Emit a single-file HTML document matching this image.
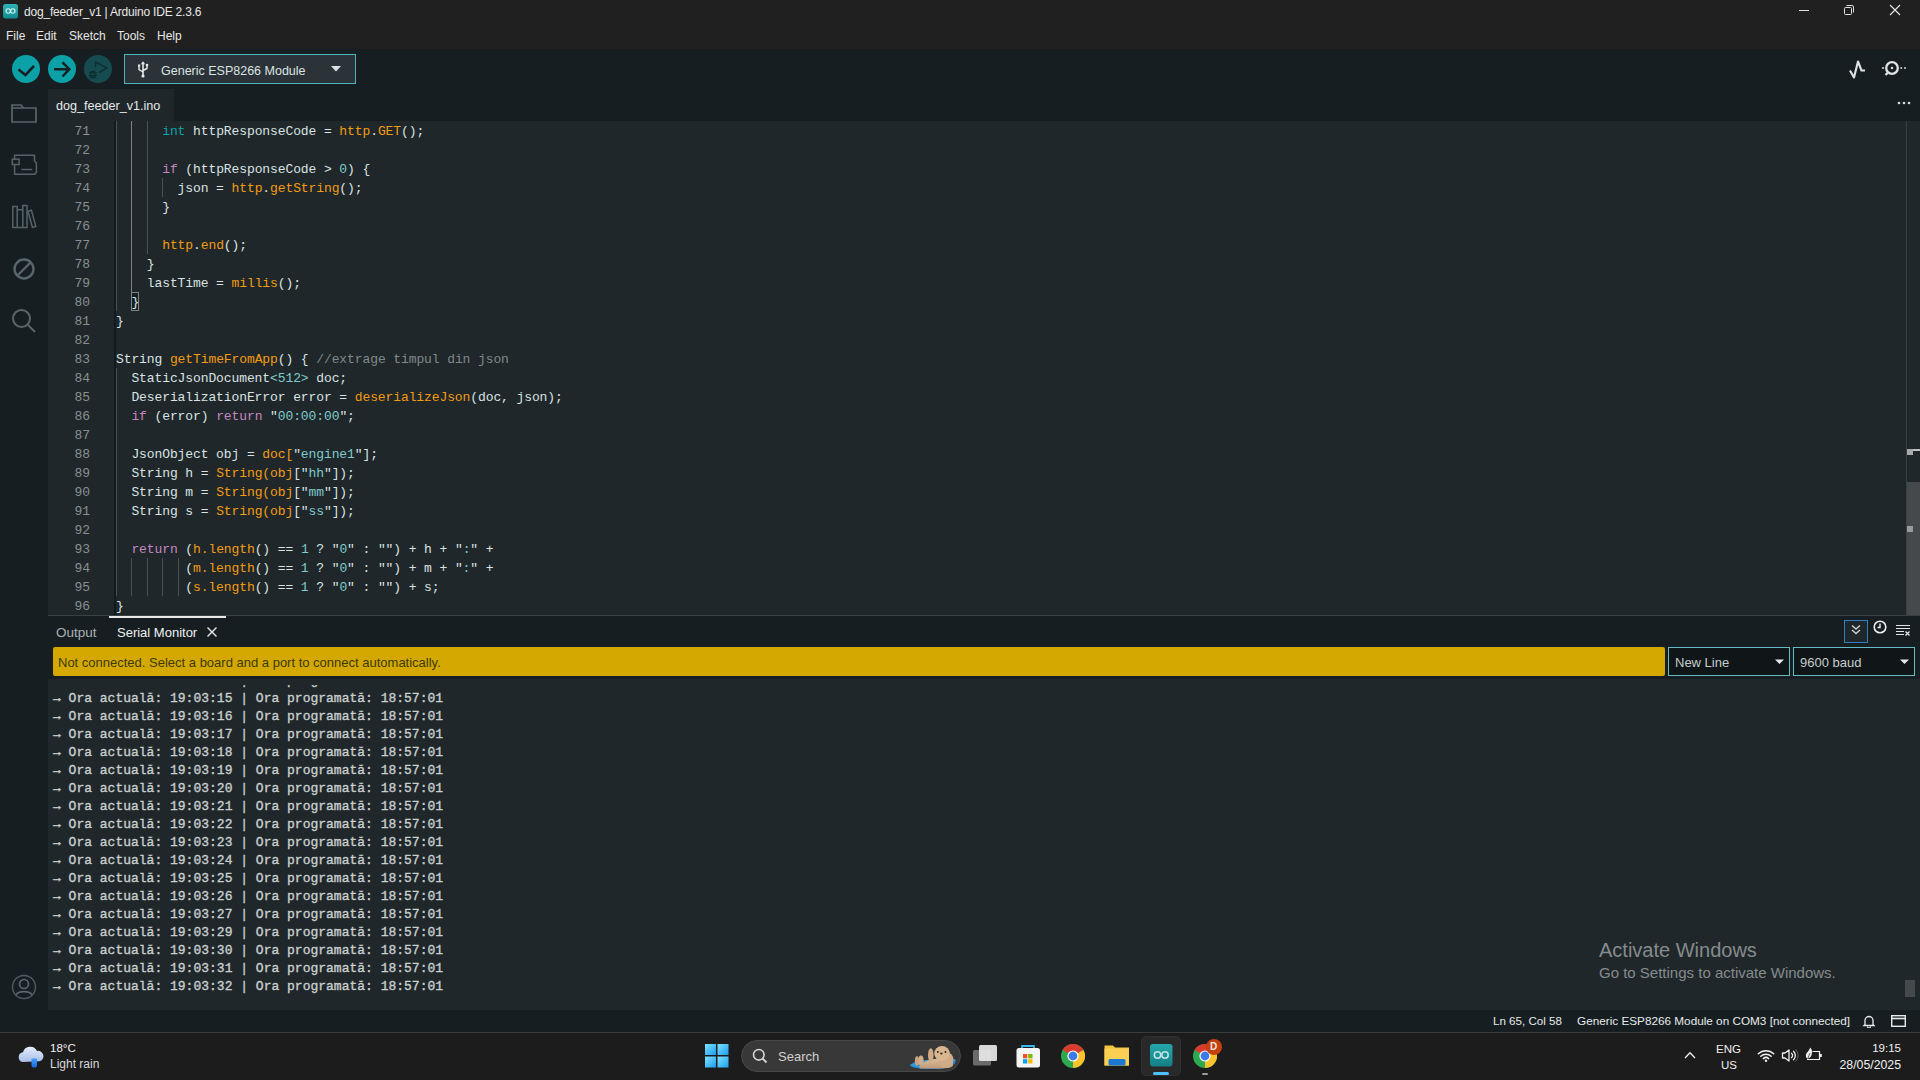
<!DOCTYPE html>
<html><head><meta charset="utf-8">
<style>
*{margin:0;padding:0;box-sizing:border-box}
html,body{width:1920px;height:1080px;overflow:hidden;background:#1f272a;font-family:"Liberation Sans",sans-serif;color:#dadada}
.a{position:absolute}
#title{left:0;top:0;width:1920px;height:49px;background:#202020}
#tb{left:0;top:49px;width:1920px;height:40px;background:#171e21}
#side{left:0;top:89px;width:48px;height:921px;background:#171e21}
#tabrow{left:48px;top:89px;width:1872px;height:32px;background:#171e21}
#editor{left:48px;top:121px;width:1872px;height:494px;background:#1f272a;overflow:hidden}
#panelhdr{left:48px;top:615px;width:1872px;height:64px;background:#171e21}
#serial{left:48px;top:679px;width:1872px;height:331px;background:#1f272a;overflow:hidden}
#status{left:0;top:1010px;width:1920px;height:22px;background:#171e21}
#taskbar{left:0;top:1032px;width:1920px;height:48px;background:#1c1c1c;box-shadow:inset 0 1px 0 #3a3a3a}
.t{position:absolute;white-space:pre;line-height:1}
.code{position:absolute;font-family:"Liberation Mono",monospace;font-size:13px;white-space:pre;letter-spacing:-0.1px;color:#dae3e3;line-height:19px}
.ln{position:absolute;font-family:"Liberation Mono",monospace;font-size:13px;white-space:pre;letter-spacing:-0.1px;color:#8a8f91;line-height:19px;text-align:right;width:42px;left:0}
.k{color:#0ca1a6}.p{color:#c586c0}.f{color:#f39c12}.s{color:#7fcbcd}.c{color:#7f8a8c}
.ser{position:absolute;left:5px;font-family:"Liberation Mono",monospace;font-weight:normal;-webkit-text-stroke:0.35px #c9cece;font-size:13px;white-space:pre;color:#c9cece;line-height:18px}
</style></head><body>
<div class="a" id="title">
  <svg class="a" style="left:3px;top:4px" width="15" height="15" viewBox="0 0 15 15"><defs><linearGradient id="ag" x1="0" y1="0" x2="0" y2="1"><stop offset="0" stop-color="#2bb3b7"/><stop offset="1" stop-color="#128a8f"/></linearGradient></defs><rect x="0" y="0" width="15" height="14.5" rx="2.5" fill="url(#ag)"/><circle cx="5.2" cy="7" r="2.2" fill="none" stroke="#d8f2f2" stroke-width="1.1"/><circle cx="9.8" cy="7" r="2.2" fill="none" stroke="#d8f2f2" stroke-width="1.1"/></svg>
  <div class="t" style="left:24px;top:6px;font-size:12px;letter-spacing:-0.2px;color:#e8e8e8">dog_feeder_v1 | Arduino IDE 2.3.6</div>
  <div class="t" style="left:6px;top:30px;font-size:12px;color:#e6e6e6">File</div>
  <div class="t" style="left:36px;top:30px;font-size:12px;color:#e6e6e6">Edit</div>
  <div class="t" style="left:69px;top:30px;font-size:12px;color:#e6e6e6">Sketch</div>
  <div class="t" style="left:117px;top:30px;font-size:12px;color:#e6e6e6">Tools</div>
  <div class="t" style="left:157px;top:30px;font-size:12px;color:#e6e6e6">Help</div>
  <!-- window controls -->
  <div class="a" style="left:1799px;top:10px;width:10px;height:1px;background:#e0e0e0"></div>
  <svg class="a" style="left:1843px;top:4px" width="12" height="12" viewBox="0 0 12 12"><rect x="1.5" y="3.5" width="7" height="7" rx="1" fill="none" stroke="#e0e0e0" stroke-width="1"/><path d="M3.5 1.5 H9 a1.5 1.5 0 0 1 1.5 1.5 V8.5" fill="none" stroke="#e0e0e0" stroke-width="1"/></svg>
  <svg class="a" style="left:1889px;top:4px" width="12" height="12" viewBox="0 0 12 12"><path d="M1 1 L11 11 M11 1 L1 11" stroke="#e8e8e8" stroke-width="1.1"/></svg>
</div>
<div class="a" id="tb">
  <div class="a" style="left:12px;top:6px;width:28px;height:28px;border-radius:50%;background:#0ca1a6"></div>
  <svg class="a" style="left:12px;top:6px" width="28" height="28" viewBox="0 0 28 28"><path d="M6.5 14.5 L13.5 20 L22 10.8" fill="none" stroke="#172024" stroke-width="2.6"/></svg>
  <div class="a" style="left:48px;top:6px;width:28px;height:28px;border-radius:50%;background:#0ca1a6"></div>
  <svg class="a" style="left:48px;top:6px" width="28" height="28" viewBox="0 0 28 28"><path d="M6 14.2 H21 M14.5 7.3 L21.3 14.2 L14.5 21.5" fill="none" stroke="#172024" stroke-width="2.5"/></svg>
  <div class="a" style="left:84px;top:6px;width:28px;height:28px;border-radius:50%;background:#164b50"></div>
  <svg class="a" style="left:84px;top:6px" width="28" height="28" viewBox="0 0 28 28"><path d="M11.5 12 V7 L23 13 L15 17.5" fill="none" stroke="#0d3033" stroke-width="1.6" stroke-linejoin="round"/><ellipse cx="9" cy="19.5" rx="2.6" ry="3.2" fill="none" stroke="#0d3033" stroke-width="1.4"/><path d="M5 17.5 H13 M5 20.5 H13 M5.5 23 L7 22 M12.5 23 L11 22 M9 16 V23" stroke="#0d3033" stroke-width="1"/></svg>
  <div class="a" style="left:124px;top:5px;width:232px;height:30px;border:1px solid #4db6bb;background:#2c3338"></div>
  <svg class="a" style="left:136px;top:12px" width="14" height="17" viewBox="0 0 14 17"><path d="M7 3 V14.5" stroke="#e6eaea" stroke-width="1.6"/><path d="M4.8 3.2 L7 0.3 L9.2 3.2 Z" fill="#e6eaea"/><path d="M3 5 V8.5 L7 11" fill="none" stroke="#e6eaea" stroke-width="1.4"/><path d="M11 4.5 V7.5 L7 9.5" fill="none" stroke="#e6eaea" stroke-width="1.4"/><rect x="2" y="3.5" width="2.2" height="2.2" fill="#e6eaea"/><circle cx="11" cy="4" r="1.3" fill="#e6eaea"/><circle cx="7" cy="15" r="1.6" fill="#e6eaea"/></svg>
  <div class="t" style="left:161px;top:16px;font-size:12.5px;color:#dae3e3">Generic ESP8266 Module</div>
  <svg class="a" style="left:331px;top:17px" width="10" height="6" viewBox="0 0 10 6"><path d="M0 0 H10 L5 5.5 Z" fill="#dae3e3"/></svg>
  <!-- right icons -->
  <svg class="a" style="left:1848px;top:9px" width="20" height="22" viewBox="0 0 20 22"><path d="M2 12.5 L6 19.5 L10 3.5 L13.5 12.5 H17" fill="none" stroke="#dfe5e5" stroke-width="2.1" stroke-linejoin="round"/></svg>
  <svg class="a" style="left:1880px;top:9px" width="28" height="24" viewBox="0 0 28 24"><circle cx="12" cy="10" r="5.8" fill="none" stroke="#dfe5e5" stroke-width="2.3"/><circle cx="12" cy="10" r="1.2" fill="#dfe5e5"/><path d="M8 14.5 L5.5 17" stroke="#dfe5e5" stroke-width="2.3"/><circle cx="3" cy="10" r="1" fill="#dfe5e5"/><circle cx="21.2" cy="10" r="0.9" fill="#dfe5e5"/><circle cx="25" cy="10" r="0.9" fill="#dfe5e5"/></svg>
</div>
<div class="a" id="side">
  <svg class="a" style="left:11px;top:13px" width="26" height="22" viewBox="0 0 26 22"><path d="M1 3 H10 L12.5 6 H25 V20 H1 Z M1 6 H12.5" fill="none" stroke="#58656b" stroke-width="1.7"/></svg>
  <svg class="a" style="left:11px;top:63px" width="28" height="26" viewBox="0 0 28 26"><path d="M3.6 3.2 H23.5 V9 L25.4 11 V20.5 L23.8 22.2 H3.6 Z" fill="none" stroke="#56636a" stroke-width="1.5"/><rect x="1.3" y="7.2" width="6.8" height="5.3" fill="#171e21" stroke="#56636a" stroke-width="1.5"/><path d="M10.5 17.5 H21.2" stroke="#56636a" stroke-width="1.4"/></svg>
  <svg class="a" style="left:11px;top:115px" width="28" height="26" viewBox="0 0 28 26"><path d="M1.8 2.5 H6.2 V23.5 H1.8 Z M6.2 5.8 H11.8 V23.5 H6.2 M11.8 1.5 H16 V23.5 H11.8 Z" fill="none" stroke="#56636a" stroke-width="1.5"/><path d="M17 7.3 L20.4 6.3 L24.8 22.4 L21.4 23.4 Z" fill="none" stroke="#56636a" stroke-width="1.5"/></svg>
  <svg class="a" style="left:12px;top:168px" width="24" height="24" viewBox="0 0 24 24"><circle cx="12" cy="12" r="9.5" fill="none" stroke="#58656b" stroke-width="2.4"/><path d="M5.5 18.5 L18.5 5.5" stroke="#58656b" stroke-width="2.4"/></svg>
  <svg class="a" style="left:10px;top:218px" width="28" height="28" viewBox="0 0 28 28"><circle cx="11.5" cy="11.5" r="8.5" fill="none" stroke="#58656b" stroke-width="2"/><path d="M18 18 L25 25" stroke="#58656b" stroke-width="2"/></svg>
  <svg class="a" style="left:11px;top:885px" width="26" height="26" viewBox="0 0 26 26"><circle cx="13" cy="13" r="11.5" fill="none" stroke="#4f5b61" stroke-width="1.4"/><circle cx="13" cy="10" r="4.5" fill="none" stroke="#58656b" stroke-width="1.7"/><path d="M5 21 C7 16.5 19 16.5 21 21" fill="none" stroke="#58656b" stroke-width="1.7"/></svg>
</div>
<div class="a" id="tabrow">
  <div class="a" style="left:0;top:0;width:126px;height:32px;background:#1f272a"></div>
  <div class="t" style="left:8px;top:11px;font-size:12.6px;color:#e6eaea">dog_feeder_v1.ino</div>
  <svg class="a" style="left:1849px;top:12px" width="14" height="4" viewBox="0 0 14 4"><circle cx="2" cy="2" r="1.3" fill="#d0dde0"/><circle cx="7" cy="2" r="1.3" fill="#d0dde0"/><circle cx="12" cy="2" r="1.3" fill="#d0dde0"/></svg>
</div>
<div class="a" id="editor">
<div class="a" style="left:66px;top:0px;width:2px;height:494px;background:#131a1c"></div>
<div class="a" style="left:68px;top:0px;width:1px;height:190px;background:#4a5154"></div>
<div class="a" style="left:83px;top:0px;width:1px;height:171px;background:#7d8385"></div>
<div class="a" style="left:99px;top:0px;width:1px;height:133px;background:#4a5154"></div>
<div class="a" style="left:114px;top:57px;width:1px;height:19px;background:#4a5154"></div>
<div class="a" style="left:68px;top:247px;width:1px;height:228px;background:#4a5154"></div>
<div class="a" style="left:83px;top:437px;width:1px;height:38px;background:#4a5154"></div>
<div class="a" style="left:99px;top:437px;width:1px;height:38px;background:#4a5154"></div>
<div class="a" style="left:114px;top:437px;width:1px;height:38px;background:#4a5154"></div>
<div class="a" style="left:130px;top:437px;width:1px;height:38px;background:#4a5154"></div>
<div class="a" style="left:83px;top:171px;width:8px;height:19px;border:1px solid #7f8587;background:#142124"></div>
<div class="ln" style="top:1px">71</div>
<div class="code" style="left:68px;top:1px">      <span class="k">int</span> httpResponseCode = <span class="f">http</span>.<span class="f">GET</span>();</div>
<div class="ln" style="top:20px">72</div>
<div class="ln" style="top:39px">73</div>
<div class="code" style="left:68px;top:39px">      <span class="p">if</span> (httpResponseCode &gt; <span class="s">0</span>) {</div>
<div class="ln" style="top:58px">74</div>
<div class="code" style="left:68px;top:58px">        json = <span class="f">http</span>.<span class="f">getString</span>();</div>
<div class="ln" style="top:77px">75</div>
<div class="code" style="left:68px;top:77px">      }</div>
<div class="ln" style="top:96px">76</div>
<div class="ln" style="top:115px">77</div>
<div class="code" style="left:68px;top:115px">      <span class="f">http</span>.<span class="f">end</span>();</div>
<div class="ln" style="top:134px">78</div>
<div class="code" style="left:68px;top:134px">    }</div>
<div class="ln" style="top:153px">79</div>
<div class="code" style="left:68px;top:153px">    lastTime = <span class="f">millis</span>();</div>
<div class="ln" style="top:172px">80</div>
<div class="code" style="left:68px;top:172px">  }</div>
<div class="ln" style="top:191px">81</div>
<div class="code" style="left:68px;top:191px">}</div>
<div class="ln" style="top:210px">82</div>
<div class="ln" style="top:229px">83</div>
<div class="code" style="left:68px;top:229px">String <span class="f">getTimeFromApp</span>() { <span class="c">//extrage timpul din json</span></div>
<div class="ln" style="top:248px">84</div>
<div class="code" style="left:68px;top:248px">  StaticJsonDocument<span class="s">&lt;512&gt;</span> doc;</div>
<div class="ln" style="top:267px">85</div>
<div class="code" style="left:68px;top:267px">  DeserializationError error = <span class="f">deserializeJson</span>(doc, json);</div>
<div class="ln" style="top:286px">86</div>
<div class="code" style="left:68px;top:286px">  <span class="p">if</span> (error) <span class="p">return</span> &quot;<span class="s">00:00:00</span>&quot;;</div>
<div class="ln" style="top:305px">87</div>
<div class="ln" style="top:324px">88</div>
<div class="code" style="left:68px;top:324px">  JsonObject obj = <span class="f">doc[</span>&quot;<span class="s">engine1</span>&quot;];</div>
<div class="ln" style="top:343px">89</div>
<div class="code" style="left:68px;top:343px">  String h = <span class="f">String(obj</span>[&quot;<span class="s">hh</span>&quot;]);</div>
<div class="ln" style="top:362px">90</div>
<div class="code" style="left:68px;top:362px">  String m = <span class="f">String(obj</span>[&quot;<span class="s">mm</span>&quot;]);</div>
<div class="ln" style="top:381px">91</div>
<div class="code" style="left:68px;top:381px">  String s = <span class="f">String(obj</span>[&quot;<span class="s">ss</span>&quot;]);</div>
<div class="ln" style="top:400px">92</div>
<div class="ln" style="top:419px">93</div>
<div class="code" style="left:68px;top:419px">  <span class="p">return</span> (<span class="f">h.length</span>() == <span class="s">1</span> ? &quot;<span class="s">0</span>&quot; : &quot;&quot;) + h + &quot;<span class="s">:</span>&quot; +</div>
<div class="ln" style="top:438px">94</div>
<div class="code" style="left:68px;top:438px">         (<span class="f">m.length</span>() == <span class="s">1</span> ? &quot;<span class="s">0</span>&quot; : &quot;&quot;) + m + &quot;<span class="s">:</span>&quot; +</div>
<div class="ln" style="top:457px">95</div>
<div class="code" style="left:68px;top:457px">         (<span class="f">s.length</span>() == <span class="s">1</span> ? &quot;<span class="s">0</span>&quot; : &quot;&quot;) + s;</div>
<div class="ln" style="top:476px">96</div>
<div class="code" style="left:68px;top:476px">}</div>
<div class="a" style="left:1858px;top:0;width:1px;height:494px;background:#394043"></div>
<div class="a" style="left:1859px;top:361px;width:13px;height:133px;background:#45494c"></div>
<div class="a" style="left:1859px;top:328px;width:13px;height:2px;background:#c0c0c0"></div>
<div class="a" style="left:1859px;top:328px;width:6px;height:6px;background:#a8a8a8"></div>
<div class="a" style="left:1859px;top:405px;width:6px;height:6px;background:#9a9a9a"></div>
</div>
<div class="a" id="panelhdr">
<div class="a" style="left:0;top:0;width:1872px;height:1px;background:#3a4145"></div>
<div class="a" style="left:61px;top:1px;width:117px;height:2px;background:#e8e8e8"></div>
<div class="t" style="left:8px;top:11px;font-size:13.5px;color:#a9b1b3">Output</div>
<div class="t" style="left:69px;top:11px;font-size:13px;color:#eef2f2">Serial Monitor</div>
<svg class="a" style="left:159px;top:12px" width="10" height="10" viewBox="0 0 10 10"><path d="M0.5 0.5 L9.5 9.5 M9.5 0.5 L0.5 9.5" stroke="#e8ecec" stroke-width="1.4"/></svg>
<div class="a" style="left:5px;top:32px;width:1612px;height:29px;background:#d4a800;border-radius:2px"></div>
<div class="t" style="left:10px;top:41px;font-size:13px;color:#3d3a0a">Not connected. Select a board and a port to connect automatically.</div>
<div class="a" style="left:1796px;top:5px;width:24px;height:23px;border:1px solid #2f7fc1;background:#1f272a"></div>
<svg class="a" style="left:1802px;top:9px" width="12" height="12" viewBox="0 0 12 12"><path d="M2 1.5 L6 5 L10 1.5 M2 6 L6 9.5 L10 6" fill="none" stroke="#c8d0d2" stroke-width="1.5"/></svg>
<svg class="a" style="left:1825px;top:5px" width="14" height="14" viewBox="0 0 14 14"><circle cx="7" cy="7" r="5.8" fill="none" stroke="#eef2f2" stroke-width="1.6"/><path d="M7 3.5 V7.5 H4.5" fill="none" stroke="#eef2f2" stroke-width="1.4"/></svg>
<svg class="a" style="left:1847px;top:9px" width="16" height="13" viewBox="0 0 16 13"><path d="M1 1.5 H15 M1 4.5 H15 M1 7.5 H9 M1 10.5 H9" stroke="#dfe5e5" stroke-width="1"/><path d="M10.5 7.5 L14.5 11.5 M14.5 7.5 L10.5 11.5" stroke="#dfe5e5" stroke-width="1.3"/></svg>
<div class="a" style="left:1620px;top:32px;width:122px;height:29px;border:1px solid #62bcc1;background:#101618"></div>
<div class="t" style="left:1627px;top:41px;font-size:13px;color:#c5cccd">New Line</div>
<svg class="a" style="left:1727px;top:44px" width="9" height="6" viewBox="0 0 9 6"><path d="M0 0.5 H9 L4.5 5 Z" fill="#e6eaea"/></svg>
<div class="a" style="left:1745px;top:32px;width:122px;height:29px;border:1px solid #62bcc1;background:#101618"></div>
<div class="t" style="left:1752px;top:41px;font-size:13px;color:#c5cccd">9600 baud</div>
<svg class="a" style="left:1852px;top:44px" width="9" height="6" viewBox="0 0 9 6"><path d="M0 0.5 H9 L4.5 5 Z" fill="#e6eaea"/></svg>
</div>
<div class="a" id="serial"><div class="a" style="left:0;top:6px;width:1800px;height:325px;overflow:hidden">
<div class="ser" style="top:-13px">→ Ora actuală: 19:03:14 | Ora programată: 18:57:01</div>
<div class="ser" style="top:5px">→ Ora actuală: 19:03:15 | Ora programată: 18:57:01</div>
<div class="ser" style="top:23px">→ Ora actuală: 19:03:16 | Ora programată: 18:57:01</div>
<div class="ser" style="top:41px">→ Ora actuală: 19:03:17 | Ora programată: 18:57:01</div>
<div class="ser" style="top:59px">→ Ora actuală: 19:03:18 | Ora programată: 18:57:01</div>
<div class="ser" style="top:77px">→ Ora actuală: 19:03:19 | Ora programată: 18:57:01</div>
<div class="ser" style="top:95px">→ Ora actuală: 19:03:20 | Ora programată: 18:57:01</div>
<div class="ser" style="top:113px">→ Ora actuală: 19:03:21 | Ora programată: 18:57:01</div>
<div class="ser" style="top:131px">→ Ora actuală: 19:03:22 | Ora programată: 18:57:01</div>
<div class="ser" style="top:149px">→ Ora actuală: 19:03:23 | Ora programată: 18:57:01</div>
<div class="ser" style="top:167px">→ Ora actuală: 19:03:24 | Ora programată: 18:57:01</div>
<div class="ser" style="top:185px">→ Ora actuală: 19:03:25 | Ora programată: 18:57:01</div>
<div class="ser" style="top:203px">→ Ora actuală: 19:03:26 | Ora programată: 18:57:01</div>
<div class="ser" style="top:221px">→ Ora actuală: 19:03:27 | Ora programată: 18:57:01</div>
<div class="ser" style="top:239px">→ Ora actuală: 19:03:29 | Ora programată: 18:57:01</div>
<div class="ser" style="top:257px">→ Ora actuală: 19:03:30 | Ora programată: 18:57:01</div>
<div class="ser" style="top:275px">→ Ora actuală: 19:03:31 | Ora programată: 18:57:01</div>
<div class="ser" style="top:293px">→ Ora actuală: 19:03:32 | Ora programată: 18:57:01</div></div>
<div class="t" style="left:1551px;top:261px;font-size:20px;color:#868b8d">Activate Windows</div>
<div class="t" style="left:1551px;top:286px;font-size:15px;color:#868b8d">Go to Settings to activate Windows.</div>
<div class="a" style="left:1857px;top:301px;width:10px;height:17px;background:#45494c"></div>
</div>
<div class="a" id="status">
<div class="t" style="left:1493px;top:5px;font-size:11.6px;color:#e6eaea">Ln 65, Col 58</div>
<div class="t" style="left:1577px;top:5px;font-size:11.75px;color:#e6eaea">Generic ESP8266 Module on COM3 [not connected]</div>
<svg class="a" style="left:1862px;top:4px" width="14" height="14" viewBox="0 0 14 14"><path d="M3 10.5 V6.5 a4 4 0 0 1 8 0 V10.5 L12 11.5 H2 Z" fill="none" stroke="#e6eaea" stroke-width="1.3"/><path d="M5.5 12.5 a1.5 1.5 0 0 0 3 0" fill="none" stroke="#e6eaea" stroke-width="1.2"/></svg>
<svg class="a" style="left:1891px;top:5px" width="15" height="12" viewBox="0 0 15 12"><rect x="0.7" y="0.7" width="13.6" height="10.6" fill="none" stroke="#e6eaea" stroke-width="1.4"/><path d="M0.7 3.5 H14.3" stroke="#e6eaea" stroke-width="1.6"/></svg>
</div>
<div class="a" id="taskbar">
<svg class="a" style="left:17px;top:11px" width="28" height="26" viewBox="0 0 28 26"><defs><linearGradient id="cl" x1="0" y1="0" x2="0" y2="1"><stop offset="0" stop-color="#e6eefc"/><stop offset="1" stop-color="#a8bde8"/></linearGradient><linearGradient id="dr" x1="0" y1="0" x2="0" y2="1"><stop offset="0" stop-color="#3fa0ff"/><stop offset="1" stop-color="#1a66e0"/></linearGradient></defs><path d="M5.5 19 a5 5 0 0 1 0.5-9.8 a7.5 7.5 0 0 1 14-1.2 a5.3 5.3 0 0 1 2.5 10.3 Z" fill="url(#cl)"/><path d="M14.5 15.5 H20 V22 a2.7 2.7 0 0 1 -5.5 0 Z" fill="url(#dr)"/></svg>
<div class="t" style="left:50px;top:11px;font-size:11.5px;color:#f2f2f2">18°C</div>
<div class="t" style="left:50px;top:26px;font-size:12px;color:#d8d8d8">Light rain</div>
<svg class="a" style="left:705px;top:12px" width="24" height="24" viewBox="0 0 24 24"><defs><linearGradient id="wl" x1="0" y1="0" x2="1" y2="1"><stop offset="0" stop-color="#7fe3ff"/><stop offset="1" stop-color="#1a9cf0"/></linearGradient></defs><rect x="0" y="0" width="11" height="11" fill="url(#wl)"/><rect x="12.5" y="0" width="11" height="11" fill="url(#wl)"/><rect x="0" y="12.5" width="11" height="11" fill="url(#wl)"/><rect x="12.5" y="12.5" width="11" height="11" fill="url(#wl)"/></svg>
<div class="a" style="left:741px;top:8px;width:220px;height:32px;border-radius:16px;background:#383838;border:1px solid #474747"></div>
<svg class="a" style="left:752px;top:16px" width="16" height="16" viewBox="0 0 16 16"><circle cx="6.8" cy="6.8" r="5.3" fill="none" stroke="#d6d6d6" stroke-width="1.6"/><path d="M10.5 10.5 L14.5 14.5" stroke="#d6d6d6" stroke-width="1.8"/></svg>
<div class="t" style="left:778px;top:18px;font-size:13px;color:#d0d0d0">Search</div>
<svg class="a" style="left:908px;top:12px" width="50" height="28" viewBox="0 0 50 28"><defs><linearGradient id="wt" x1="0" y1="0" x2="1" y2="1"><stop offset="0" stop-color="#36b0e0"/><stop offset="1" stop-color="#1b6fd0"/></linearGradient><linearGradient id="ot" x1="0" y1="0" x2="0" y2="1"><stop offset="0" stop-color="#dcbb98"/><stop offset="1" stop-color="#bf9a78"/></linearGradient></defs><path d="M2 21 C8 16 30 14 47 15 C50 19 44 24 30 25 C15 25.5 3 24 2 21 Z" fill="url(#wt)"/><ellipse cx="9" cy="17" rx="2.2" ry="4.8" fill="#c9a27f"/><ellipse cx="13" cy="16.5" rx="2.6" ry="5" fill="#d2ad8a"/><path d="M11 23 C14 17 24 14.5 34 14.5 C42 14.5 45 18 45 21 C45 23.5 40 24.5 30 24.5 L12 24.5 Z" fill="url(#ot)"/><ellipse cx="38" cy="16" rx="7.5" ry="8" fill="#cfab88"/><ellipse cx="22.8" cy="11" rx="2.8" ry="6.8" fill="#d0ab86"/><ellipse cx="34" cy="9.5" rx="7.8" ry="7.5" fill="#d8b690"/><circle cx="29.8" cy="8" r="0.9" fill="#2a2018"/><circle cx="37.5" cy="8" r="0.9" fill="#2a2018"/><ellipse cx="33.3" cy="9.5" rx="1.2" ry="1" fill="#3a2a1e"/></svg>
<svg class="a" style="left:973px;top:12px" width="26" height="24" viewBox="0 0 26 24"><rect x="0" y="6" width="18" height="15.5" rx="1.5" fill="#6a6a6a"/><rect x="6" y="1" width="18" height="16" rx="1.5" fill="#e8e8e8" opacity="0.92"/></svg>
<svg class="a" style="left:1016px;top:12px" width="25" height="25" viewBox="0 0 25 25"><path d="M6 5 V2 H18 V5" fill="none" stroke="#38b4ee" stroke-width="1.8"/><rect x="0.5" y="4" width="23.5" height="19.5" rx="2.5" fill="#f4f4f4"/><rect x="7" y="10" width="4.3" height="4.3" fill="#f25022"/><rect x="12.2" y="10" width="4.3" height="4.3" fill="#7fba00"/><rect x="7" y="15.2" width="4.3" height="4.3" fill="#00a4ef"/><rect x="12.2" y="15.2" width="4.3" height="4.3" fill="#ffb900"/></svg>
<svg class="a" style="left:1061px;top:12px" width="24" height="24" viewBox="0 0 24 24"><circle cx="12" cy="12" r="12" fill="#2da94f"/><path d="M12 12 L1.6 6 A12 12 0 0 1 22.4 6 Z" fill="#db3b2d"/><path d="M12 12 L22.4 6 A12 12 0 0 1 12 24 Z" fill="#fbc22d"/><circle cx="12" cy="12" r="5.6" fill="#fff"/><circle cx="12" cy="12" r="4.4" fill="#3b7ae8"/></svg>
<svg class="a" style="left:1104px;top:12px" width="26" height="23" viewBox="0 0 26 23"><path d="M0.5 1.5 H9 L11 3.5 H25 V21.5 H0.5 Z" fill="#f3c53c"/><rect x="0.5" y="4.5" width="24.5" height="17" fill="#fad054"/><rect x="4.5" y="15" width="17" height="6.5" rx="1.5" fill="#1d78d4"/></svg>
<div class="a" style="left:1141px;top:4px;width:40px;height:40px;border-radius:5px;background:#292929;border:1px solid #303030"></div>
<svg class="a" style="left:1150px;top:12px" width="23" height="23" viewBox="0 0 23 23"><defs><linearGradient id="ar" x1="0" y1="0" x2="0" y2="1"><stop offset="0" stop-color="#25a8ac"/><stop offset="1" stop-color="#137f84"/></linearGradient></defs><rect x="0" y="0" width="22.5" height="22.5" rx="3" fill="url(#ar)"/><circle cx="7.5" cy="11" r="3.2" fill="none" stroke="#bfe4e4" stroke-width="1.5"/><circle cx="15" cy="11" r="3.2" fill="none" stroke="#bfe4e4" stroke-width="1.5"/></svg>
<div class="a" style="left:1153px;top:40px;width:16px;height:3px;border-radius:2px;background:#4cc2ff"></div>
<svg class="a" style="left:1193px;top:12px" width="24" height="24" viewBox="0 0 24 24"><circle cx="12" cy="12" r="12" fill="#2da94f"/><path d="M12 12 L1.6 6 A12 12 0 0 1 22.4 6 Z" fill="#db3b2d"/><path d="M12 12 L22.4 6 A12 12 0 0 1 12 24 Z" fill="#fbc22d"/><circle cx="12" cy="12" r="5.6" fill="#fff"/><circle cx="12" cy="12" r="4.4" fill="#3b7ae8"/></svg>
<div class="a" style="left:1206px;top:7px;width:16px;height:16px;border-radius:50%;background:#c3400f"></div>
<div class="t" style="left:1210px;top:10px;font-size:10px;font-weight:bold;color:#f4e4e0">D</div>
<div class="a" style="left:1202px;top:41px;width:6px;height:2px;border-radius:1px;background:#9a9a9a"></div>
<svg class="a" style="left:1684px;top:19px" width="12" height="8" viewBox="0 0 12 8"><path d="M1 7 L6 1.8 L11 7" fill="none" stroke="#f0f0f0" stroke-width="1.3"/></svg>
<div class="t" style="left:1716px;top:12px;font-size:11.5px;color:#f0f0f0">ENG</div>
<div class="t" style="left:1721px;top:28px;font-size:11.5px;color:#f0f0f0">US</div>
<svg class="a" style="left:1757px;top:17px" width="18" height="13" viewBox="0 0 18 13"><path d="M1.3 4.8 a11 11 0 0 1 15.4 0 M3.8 7.3 a7.5 7.5 0 0 1 10.4 0 M6.3 9.6 a4 4 0 0 1 5.4 0" fill="none" stroke="#f0f0f0" stroke-width="1.5" stroke-linecap="round"/><circle cx="9" cy="11.8" r="1.2" fill="#f0f0f0"/></svg>
<svg class="a" style="left:1781px;top:16px" width="18" height="15" viewBox="0 0 18 15"><path d="M1.5 5 H4 L8 2 V13 L4 10 H1.5 Z" fill="none" stroke="#f0f0f0" stroke-width="1.3" stroke-linejoin="round"/><path d="M10.5 5.3 a2.8 2.8 0 0 1 0 4.4 M12.5 3.2 a6 6 0 0 1 0 8.6" fill="none" stroke="#f0f0f0" stroke-width="1.3" stroke-linecap="round"/><path d="M14.5 1.3 a8.5 8.5 0 0 1 0 12.4" fill="none" stroke="#666" stroke-width="0.9"/></svg>
<svg class="a" style="left:1805px;top:15px" width="18" height="15" viewBox="0 0 18 15"><path d="M7.5 4.5 H14.5 V12.5 H2" fill="none" stroke="#f0f0f0" stroke-width="1.2"/><rect x="15" y="7" width="1.8" height="3" fill="#f0f0f0"/><path d="M2 11.5 C0 9 1 6 3 4.5 C4 3 5 1.5 5.3 0.5 C7 2 7.5 5 6.5 8 C6 10 4.5 11.5 2 11.5 Z" fill="#f0f0f0"/><path d="M3 11 L5 6" stroke="#1c1c1c" stroke-width="0.7"/></svg>
<div class="t" style="left:1801px;width:100px;text-align:right;top:11px;font-size:11.5px;color:#f0f0f0">19:15</div>
<div class="t" style="left:1801px;width:100px;text-align:right;top:27px;font-size:12.3px;color:#f0f0f0">28/05/2025</div>
</div>
</body></html>
